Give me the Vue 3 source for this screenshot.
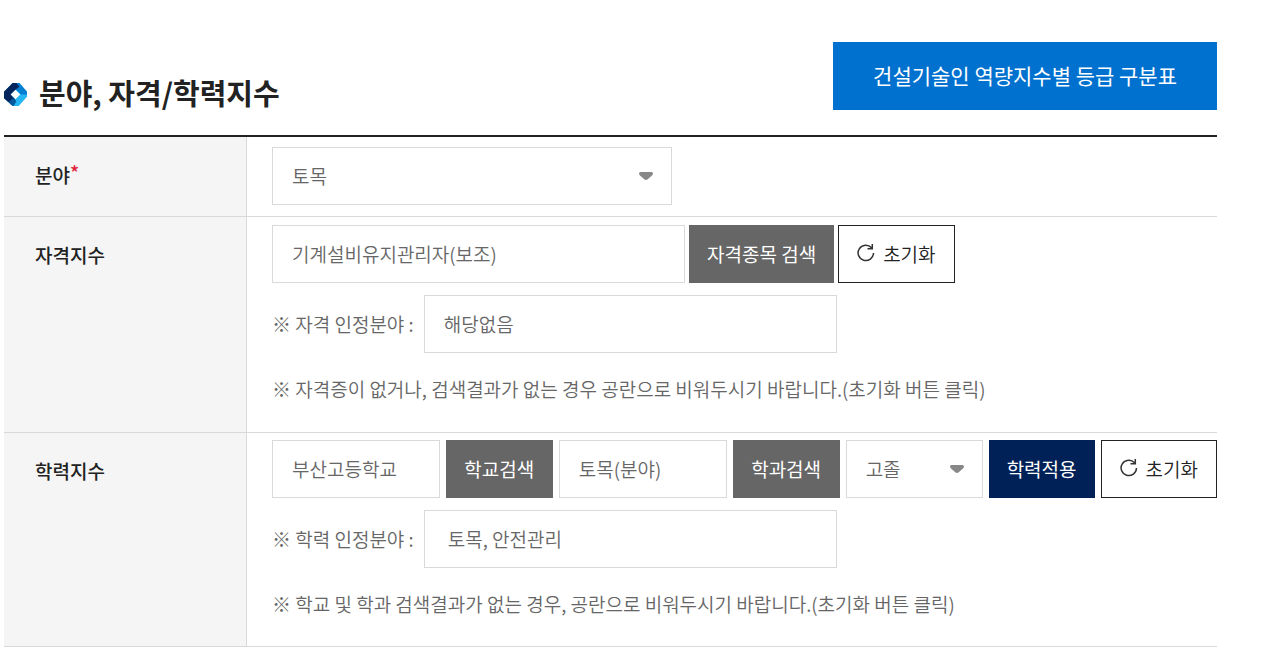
<template>
  <main class="page">
    <header class="page-header">
      <h1 class="title">
        <svg class="title-icon" viewBox="0 0 24 24" aria-hidden="true">
          <path d="M9 0h7l8 9v5L15 24H9l-9-8V9z" fill="#0aa5ee" />
          <path d="M17 12h7v2L15 24h-4l-1-5z" fill="#25b7f5" />
          <path d="M10 0h6l8 9v3h-6l-6-6z" fill="#067fd0" />
          <path d="M9 0h4l3 4-4 3-5 5 5 6-4 5-8-7V9z" fill="#04245c" />
          <path d="M5 20l4-4 4 3-3 5H9z" fill="#075a9e" />
          <path d="M12 7l5 5-5 5-5-5z" fill="#fff" />
        </svg>
        분야, 자격/학력지수
      </h1>
      <button type="button" class="btn-guide">건설기술인 역량지수별 등급 구분표</button>
    </header>

    <table class="form-table">
      <tbody>
        <tr>
          <th scope="row"><label for="field">분야</label><span class="required">*</span></th>
          <td class="cell-single">
            <div class="select select-field">
              <select id="field" v-model="field">
                <option>토목</option>
                <option>건축</option>
              </select>
              <svg class="arrow" viewBox="0 0 14 8" aria-hidden="true">
                <path d="M1.5 0h11Q14 0 14 1.5q0 1-1 2L9 7Q7 9 5 7L1 3.500Q0 2.500 0 1.500 0 0 1.500 0z" fill="#888" />
              </svg>
            </div>
          </td>
        </tr>
        <tr>
          <th scope="row"><label for="license">자격지수</label></th>
          <td class="cell-license">
            <div class="row row-license">
              <input id="license" v-model="license" type="text" class="input-wide">
              <button type="button" class="btn btn-gray">자격종목 검색</button>
              <button type="button" class="btn btn-reset" @click="resetLicense">
                <svg class="reset-icon" viewBox="0 0 18 18" aria-hidden="true">
                  <path d="M16.500 9A7.700 7.700 0 1 1 14.500 3.700M15.300 0v4.700h-4.800" />
                </svg>
                초기화
              </button>
            </div>
            <div class="row row-area">
              <label for="licenseArea">※ 자격 인정분야 :</label>
              <input id="licenseArea" v-model="licenseArea" type="text" class="input-wide">
            </div>
            <p class="note">※ 자격증이 없거나, 검색결과가 없는 경우 공란으로 비워두시기 바랍니다.(초기화 버튼 클릭)</p>
          </td>
        </tr>
        <tr>
          <th scope="row"><label for="school">학력지수</label></th>
          <td class="cell-school">
            <div class="row row-school">
              <input id="school" v-model="school" type="text" class="input-fill">
              <button type="button" class="btn btn-gray">학교검색</button>
              <input v-model="major" type="text" class="input-fill" aria-label="학과">
              <button type="button" class="btn btn-gray">학과검색</button>
              <div class="select select-degree">
                <select v-model="degree" aria-label="학력">
                  <option>고졸</option>
                  <option>학사</option>
                </select>
                <svg class="arrow" viewBox="0 0 14 8" aria-hidden="true">
                  <path d="M1.5 0h11Q14 0 14 1.5q0 1-1 2L9 7Q7 9 5 7L1 3.500Q0 2.500 0 1.500 0 0 1.500 0z" fill="#888" />
                </svg>
              </div>
              <button type="button" class="btn btn-navy">학력적용</button>
              <button type="button" class="btn btn-reset" @click="resetSchool">
                <svg class="reset-icon" viewBox="0 0 18 18" aria-hidden="true">
                  <path d="M16.500 9A7.700 7.700 0 1 1 14.500 3.700M15.300 0v4.700h-4.800" />
                </svg>
                초기화
              </button>
            </div>
            <div class="row row-area">
              <label for="schoolArea">※ 학력 인정분야 :</label>
              <input id="schoolArea" v-model="schoolArea" type="text" class="input-wide input-indent">
            </div>
            <p class="note">※ 학교 및 학과 검색결과가 없는 경우, 공란으로 비워두시기 바랍니다.(초기화 버튼 클릭)</p>
          </td>
        </tr>
      </tbody>
    </table>
  </main>
</template>

<script setup>
import { ref } from 'vue'

const field = ref('토목')

const license = ref('기계설비유지관리자(보조)')
const licenseArea = ref('해당없음')

const school = ref('부산고등학교')
const major = ref('토목(분야)')
const degree = ref('고졸')
const schoolArea = ref('토목, 안전관리')

const resetLicense = () => {
  license.value = ''
  licenseArea.value = ''
}

const resetSchool = () => {
  school.value = ''
  major.value = ''
  schoolArea.value = ''
}
</script>

<style>
body {
  background: #fff;
}
</style>

<style scoped>
.page,
.page button,
.page input,
.page select {
  font-family: "Noto Sans CJK KR", sans-serif;
  font-size: 19px;
  font-weight: 350;
}

.page {
  padding: 42px 55px 0 4px;
  color: #666;
}

.page *,
.page *::before {
  box-sizing: border-box;
}

.page-header {
  display: flex;
  align-items: center;
  justify-content: space-between;
  padding-bottom: 25px;
}

.title {
  display: flex;
  align-items: center;
  gap: 12px;
  margin: 32px 0 0;
  font-size: 29px;
  font-weight: 700;
  line-height: 36px;
  color: #222;
}

.title-icon {
  width: 23px;
  height: 23px;
  margin-top: 4px;
}

.page .btn-guide {
  height: 68px;
  padding: 0 40px 2px;
  border: 0;
  background: #0071ce;
  color: #fff;
  font-size: 21px;
  font-weight: 400;
  cursor: pointer;
}

.form-table {
  width: 100%;
  table-layout: fixed;
  border-collapse: separate;
  border-spacing: 0;
  border-top: 2px solid #222;
}

.form-table th {
  width: 243px;
  padding: 23px 31px;
  border-right: 1px solid #d9d9d9;
  border-bottom: 1px solid #d9d9d9;
  background: #f5f5f5;
  color: #222;
  font-weight: 500;
  line-height: 30px;
  text-align: left;
  vertical-align: top;
}

.form-table td {
  padding: 8px 0 18px 25px;
  border-bottom: 1px solid #d9d9d9;
  vertical-align: top;
}

.form-table .cell-single {
  padding-top: 10px;
  padding-bottom: 11px;
}

.form-table .cell-license {
  padding-bottom: 19px;
}

.form-table .cell-school {
  padding-top: 7px;
}

.required {
  color: #e2243b;
  line-height: 1;
  vertical-align: 3px;
}

.row {
  display: flex;
  align-items: center;
  margin-bottom: 12px;
}

.row-license {
  gap: 4px;
}

.row-school {
  gap: 6px;
}

.row-area {
  gap: 10px;
}

.row-area label {
  padding-bottom: 2px;
}

.page input,
.page select {
  height: 58px;
  padding: 0 19px 2px;
  border: 1px solid #d9d9d9;
  border-radius: 0;
  background: #fff;
  color: #666;
}

.page .input-wide {
  width: 413px;
}

.page .input-indent {
  padding-left: 23px;
}

.input-fill {
  flex: 1;
  min-width: 0;
}

.select {
  display: grid;
  align-items: center;
}

.select select,
.arrow {
  grid-area: 1 / 1;
}

.select select {
  width: 100%;
  appearance: none;
}

.select-field {
  width: 400px;
}

.select-degree {
  width: 137px;
}

.arrow {
  justify-self: end;
  width: 14px;
  height: 8px;
  margin-right: 19px;
  pointer-events: none;
}

.page .btn {
  display: flex;
  align-items: center;
  justify-content: center;
  gap: 8px;
  height: 58px;
  padding: 0 18px 2px;
  border: 0;
  color: #fff;
  font-weight: 400;
  white-space: nowrap;
  cursor: pointer;
}

.page .btn-gray {
  min-width: 107px;
  background: #666;
}

.page .btn-navy {
  background: #002157;
}

.page .btn-reset {
  border: 1px solid #222;
  background: #fff;
  color: #222;
  font-weight: 350;
}

.reset-icon {
  width: 18px;
  height: 18px;
  fill: none;
  stroke: #333;
  stroke-width: 1.5;
}

.note {
  margin: 0;
  line-height: 48px;
}
</style>
